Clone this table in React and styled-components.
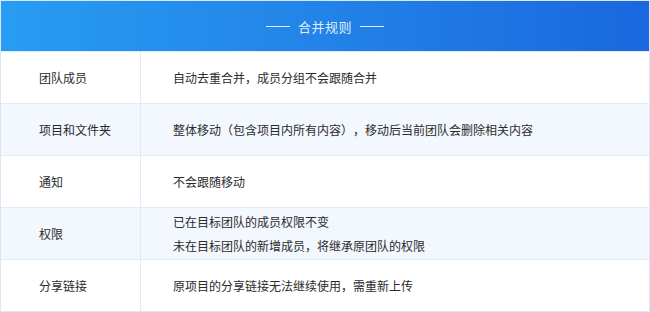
import styled, { createGlobalStyle } from 'styled-components';

const GlobalStyle = createGlobalStyle`
    html, body {
        margin: 0;
        padding: 0;
        background: #fff;
    }
    body {
        font-family: "Noto Sans CJK SC", "Noto Sans", sans-serif;
        text-spacing-trim: space-all;
        -webkit-font-smoothing: antialiased;
    }
`;

const RulesTable = styled.div`
    width: 650px;
    height: 312px;
    box-sizing: border-box;
    border: 1px solid #dbe6f6;
    display: flex;
    flex-direction: column;
    background: #fff;
`;

const Header = styled.div`
    height: 50px;
    flex-shrink: 0;
    display: flex;
    align-items: center;
    justify-content: center;
    gap: 8px;
    background: linear-gradient(90deg, #289cf2 0%, #2283e8 50%, #1a67df 100%);
    color: rgba(255, 255, 255, 0.88);
    font-size: 13px;
    letter-spacing: 0.5px;
`;

const HeaderLine = styled.span`
    width: 24px;
    height: 1px;
    background: rgba(255, 255, 255, 0.85);
`;

const Row = styled.div`
    height: 52px;
    box-sizing: border-box;
    border-top: 1px solid #e1eaf7;
    display: flex;
    background: ${p => (p.$shaded ? '#f3f7fe' : '#fff')};
`;

const Label = styled.div`
    width: 140px;
    flex-shrink: 0;
    box-sizing: border-box;
    padding-left: 38px;
    border-right: 1px solid #e1eaf7;
    display: flex;
    align-items: center;
    font-size: 12px;
    color: #2b2b2b;
`;

const Content = styled.div`
    flex: 1;
    padding-left: 32px;
    display: flex;
    flex-direction: column;
    justify-content: center;
    font-size: 12px;
    line-height: 24px;
    color: #2b2b2b;
`;

const rules = [
    { label: '团队成员', lines: ['自动去重合并，成员分组不会跟随合并'] },
    { label: '项目和文件夹', lines: ['整体移动（包含项目内所有内容），移动后当前团队会删除相关内容'] },
    { label: '通知', lines: ['不会跟随移动'] },
    { label: '权限', lines: ['已在目标团队的成员权限不变', '未在目标团队的新增成员，将继承原团队的权限'] },
    { label: '分享链接', lines: ['原项目的分享链接无法继续使用，需重新上传'] },
];

export default function App() {
    return (
        <>
            <GlobalStyle />
            <RulesTable>
                <Header>
                    <HeaderLine />
                    合并规则
                    <HeaderLine />
                </Header>
                {rules.map((r, i) => (
                    <Row key={r.label} $shaded={i % 2 === 1}>
                        <Label>{r.label}</Label>
                        <Content>
                            {r.lines.map(line => (
                                <div key={line}>{line}</div>
                            ))}
                        </Content>
                    </Row>
                ))}
            </RulesTable>
        </>
    );
}
